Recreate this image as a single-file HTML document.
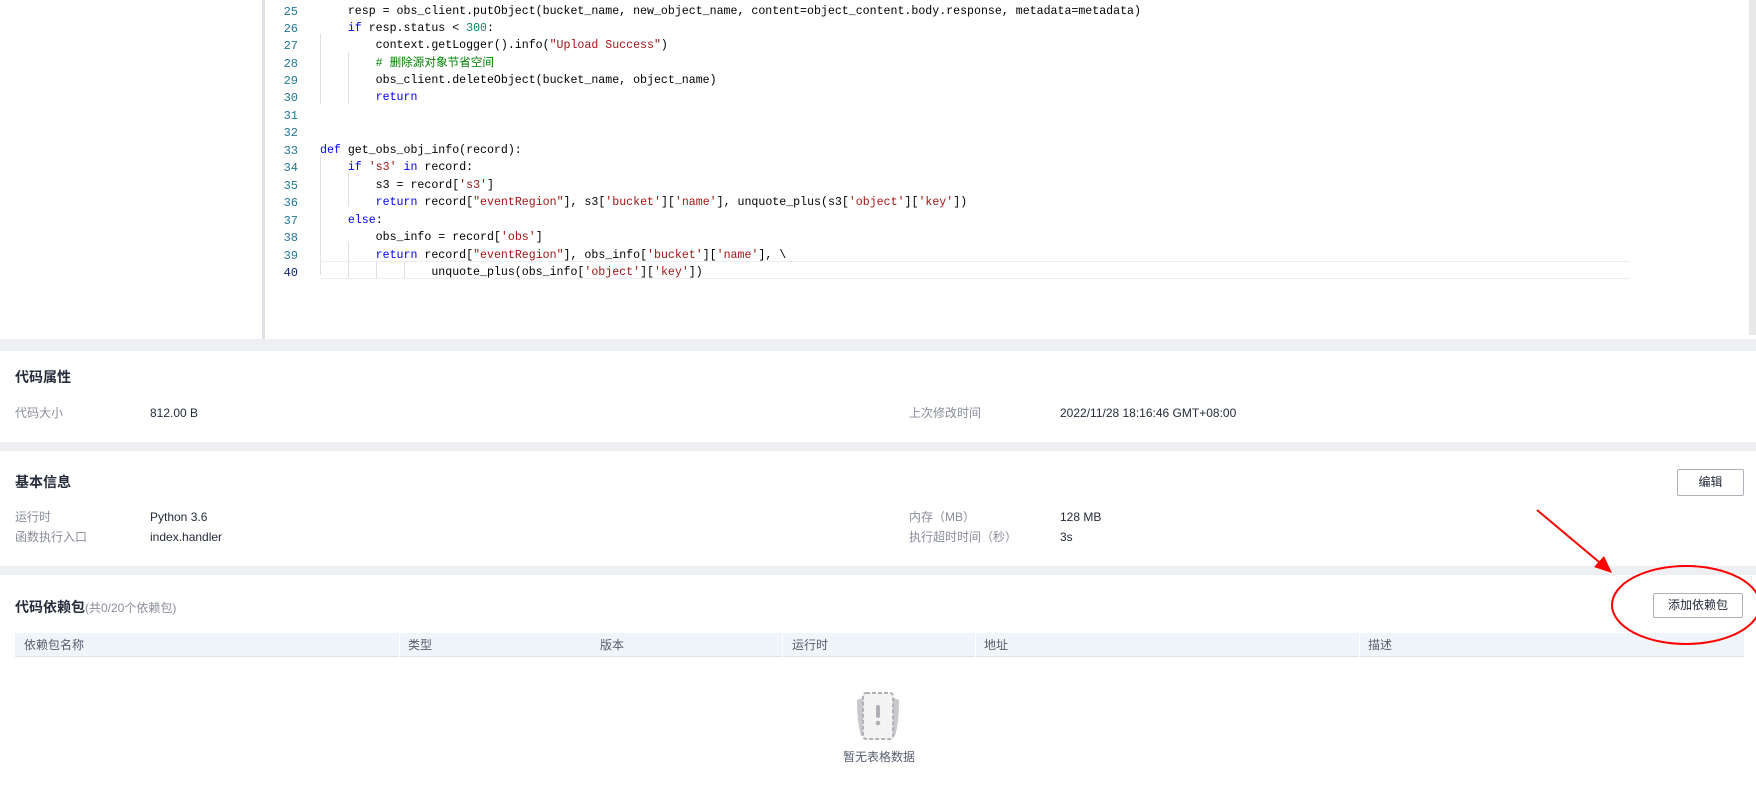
<!DOCTYPE html>
<html><head><meta charset="utf-8"><style>
*{margin:0;padding:0;box-sizing:border-box}
body{width:1756px;height:799px;overflow:hidden;background:#fff;font-family:"Liberation Sans","Noto Sans CJK SC",sans-serif;position:relative;color:#252b3a}
.abs{position:absolute}
.code{font-family:"Liberation Mono","Noto Sans CJK SC",monospace;font-size:11.6px;white-space:pre;color:#000}
.code div{line-height:16px;height:16px}
.ln{position:absolute;left:270px;width:28px;text-align:right;color:#237893;font-family:"Liberation Mono",monospace;font-size:12px}
.cl{position:absolute;left:320px}
.k{color:#0000ff}.s{color:#a31515}.c{color:#008000}.n{color:#098658}
.band{position:absolute;left:0;width:1756px;background:#eeeff3}
.t{font-size:14px;font-weight:bold;color:#252b3a}
.lb,.v{font-size:12px;line-height:16px;height:16px}
.lb{color:#8a8e99}
.v{color:#252b3a}
.btn{position:absolute;border:1px solid #adb0b8;border-radius:2px;background:#fff;font-size:12px;color:#252b3a;text-align:center}
.th{position:absolute;top:633px;height:24px;line-height:24px;font-size:12px;color:#575d6c}
.guide{position:absolute;width:1px;background:#e0e0e0}
</style></head><body>
<div class="abs" style="left:262px;top:0;width:3px;height:339px;background:#dfe1e6"></div>
<div class="abs" style="left:1749px;top:0;width:7px;height:335px;background:#e8e8e8"></div>
<div class="guide" style="left:320px;top:34px;height:70px"></div>
<div class="guide" style="left:348px;top:52px;height:52px"></div>
<div class="guide" style="left:320px;top:155px;height:120px"></div>
<div class="guide" style="left:348px;top:172px;height:35px"></div>
<div class="guide" style="left:348px;top:242px;height:35px"></div>
<div class="guide" style="left:376px;top:262px;height:17px"></div>
<div class="guide" style="left:404px;top:262px;height:17px"></div>
<div class="abs" style="left:320px;top:261px;width:1310px;height:1px;background:#eee"></div>
<div class="abs" style="left:320px;top:278px;width:1310px;height:1px;background:#eee"></div>
<div class="code">
<div class="cl" style="top:-12px"><span class="c">    # 上传至目标桶</span></div>
<div class="ln" style="top:4px">25</div><div class="cl" style="top:4px">    resp = obs_client.putObject(bucket_name, new_object_name, content=object_content.body.response, metadata=metadata)</div>
<div class="ln" style="top:21px">26</div><div class="cl" style="top:21px">    <span class="k">if</span> resp.status &lt; <span class="n">300</span>:</div>
<div class="ln" style="top:38px">27</div><div class="cl" style="top:38px">        context.getLogger().info(<span class="s">"Upload Success"</span>)</div>
<div class="ln" style="top:56px">28</div><div class="cl" style="top:56px">        <span class="c"># 删除源对象节省空间</span></div>
<div class="ln" style="top:73px">29</div><div class="cl" style="top:73px">        obs_client.deleteObject(bucket_name, object_name)</div>
<div class="ln" style="top:90px">30</div><div class="cl" style="top:90px">        <span class="k">return</span></div>
<div class="ln" style="top:108px">31</div>
<div class="ln" style="top:125px">32</div>
<div class="ln" style="top:143px">33</div><div class="cl" style="top:143px"><span class="k">def</span> get_obs_obj_info(record):</div>
<div class="ln" style="top:160px">34</div><div class="cl" style="top:160px">    <span class="k">if</span> <span class="s">'s3'</span> <span class="k">in</span> record:</div>
<div class="ln" style="top:178px">35</div><div class="cl" style="top:178px">        s3 = record[<span class="s">'s3'</span>]</div>
<div class="ln" style="top:195px">36</div><div class="cl" style="top:195px">        <span class="k">return</span> record[<span class="s">"eventRegion"</span>], s3[<span class="s">'bucket'</span>][<span class="s">'name'</span>], unquote_plus(s3[<span class="s">'object'</span>][<span class="s">'key'</span>])</div>
<div class="ln" style="top:213px">37</div><div class="cl" style="top:213px">    <span class="k">else</span>:</div>
<div class="ln" style="top:230px">38</div><div class="cl" style="top:230px">        obs_info = record[<span class="s">'obs'</span>]</div>
<div class="ln" style="top:248px">39</div><div class="cl" style="top:248px">        <span class="k">return</span> record[<span class="s">"eventRegion"</span>], obs_info[<span class="s">'bucket'</span>][<span class="s">'name'</span>], \</div>
<div class="ln" style="top:265px;color:#0b216f">40</div><div class="cl" style="top:265px">                unquote_plus(obs_info[<span class="s">'object'</span>][<span class="s">'key'</span>])</div>
</div>

<div class="band" style="top:339px;height:12px"></div>
<div class="abs t" style="left:15px;top:367px">代码属性</div>
<div class="abs lb" style="left:15px;top:405px">代码大小</div>
<div class="abs v" style="left:150px;top:405px">812.00 B</div>
<div class="abs lb" style="left:909px;top:405px">上次修改时间</div>
<div class="abs v" style="left:1060px;top:405px">2022/11/28 18:16:46 GMT+08:00</div>

<div class="band" style="top:442px;height:9px"></div>
<div class="abs t" style="left:15px;top:472px">基本信息</div>
<div class="btn" style="left:1677px;top:469px;width:67px;height:27px;line-height:25px">编辑</div>
<div class="abs lb" style="left:15px;top:509px">运行时</div>
<div class="abs v" style="left:150px;top:509px">Python 3.6</div>
<div class="abs lb" style="left:909px;top:509px">内存（MB）</div>
<div class="abs v" style="left:1060px;top:509px">128 MB</div>
<div class="abs lb" style="left:15px;top:529px">函数执行入口</div>
<div class="abs v" style="left:150px;top:529px">index.handler</div>
<div class="abs lb" style="left:909px;top:529px">执行超时时间（秒）</div>
<div class="abs v" style="left:1060px;top:529px">3s</div>

<div class="band" style="top:566px;height:9px"></div>
<div class="abs" style="left:15px;top:597px"><span class="t">代码依赖包</span><span style="font-size:12px;color:#8a8e99">(共0/20个依赖包)</span></div>
<div class="btn" style="left:1653px;top:593px;width:90px;height:25px;line-height:23px">添加依赖包</div>

<div class="abs" style="left:15px;top:633px;width:1729px;height:24px;background:#f0f4fb;border-bottom:1px solid #dfe1e6"></div>
<div class="abs" style="left:399px;top:633px;width:1px;height:24px;background:#fff"></div>
<div class="abs" style="left:782px;top:633px;width:1px;height:24px;background:#fff"></div>
<div class="abs" style="left:975px;top:633px;width:1px;height:24px;background:#fff"></div>
<div class="abs" style="left:1359px;top:633px;width:1px;height:24px;background:#fff"></div>
<div class="th" style="left:24px">依赖包名称</div>
<div class="th" style="left:408px">类型</div>
<div class="th" style="left:600px">版本</div>
<div class="th" style="left:792px">运行时</div>
<div class="th" style="left:984px">地址</div>
<div class="th" style="left:1368px">描述</div>

<svg class="abs" style="left:853px;top:692px" width="50" height="50" viewBox="0 0 50 50">
<path d="M4 8 L12 5 L12 42 L8 44 Q4 30 4 8Z" fill="#c8c9cc"/>
<path d="M46 8 L38 5 L38 42 L42 44 Q46 30 46 8Z" fill="#c8c9cc"/>
<rect x="10" y="1" width="30" height="46" rx="3" fill="#f4f4f5" stroke="#b0b2b8" stroke-width="2" stroke-dasharray="4 2"/>
<rect x="23" y="13" width="4" height="13" rx="2" fill="#aeb0b5"/>
<circle cx="25" cy="31" r="2.3" fill="#aeb0b5"/>
</svg>
<div class="abs" style="left:843px;top:748px;font-size:12px;color:#575d6c">暂无表格数据</div>

<svg class="abs" style="left:0;top:0" width="1756" height="799">
<line x1="1537" y1="510" x2="1605" y2="567" stroke="#f00" stroke-width="2"/>
<path d="M1612 573 L1594 567 L1604 556 Z" fill="#f00"/>
<ellipse cx="1686" cy="605" rx="74" ry="39" fill="none" stroke="#f00" stroke-width="2"/>
</svg>
</body></html>
